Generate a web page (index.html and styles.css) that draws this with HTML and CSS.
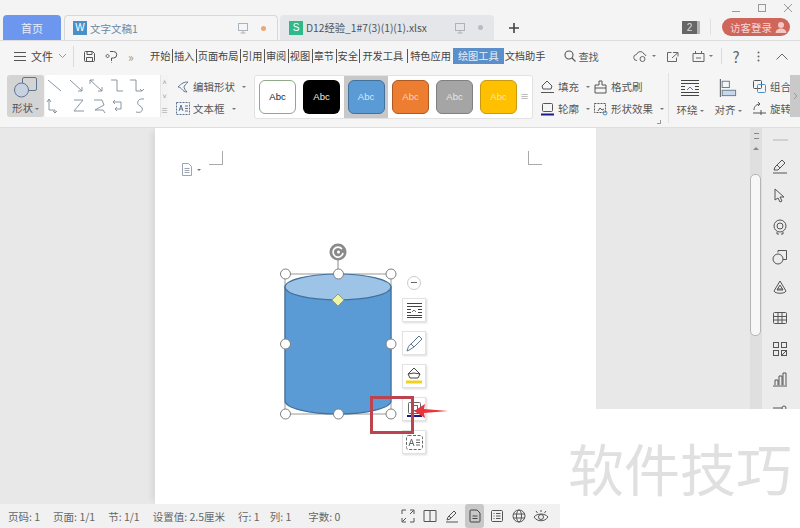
FILE: index.html
```html
<!DOCTYPE html>
<html lang="en">
<head>
    <meta charset="UTF-8">
    <title>文字文稿1</title>
    <link rel="stylesheet" href="styles.css">
</head>
<body>
<div class="window">
    <!-- Title bar with tabs -->
    <div class="tabbar">
        <div class="tab home">首页</div>
        <div class="tab doc active">
            <span class="file-icon word">W</span>
            <span class="tab-name">文字文稿1</span>
            <svg class="tab-monitor" width="14" height="14" viewBox="0 0 14 14" fill="none" stroke="#aab2bb"><rect x="2.5" y="2.5" width="9" height="7"/><path d="M7 9.5v2.5M4.5 12h5"/></svg>
            <span class="dot orange"></span>
        </div>
        <div class="tab doc">
            <span class="file-icon excel">S</span>
            <span class="tab-name dark">D12经验_1#7(3)(1)(1).xlsx</span>
            <svg class="tab-monitor" width="14" height="14" viewBox="0 0 14 14" fill="none" stroke="#aab2bb"><rect x="2.5" y="2.5" width="9" height="7"/><path d="M7 9.5v2.5M4.5 12h5"/></svg>
            <span class="dot grey"></span>
        </div>
        <svg class="plus" width="14" height="14" viewBox="0 0 14 14" stroke="#444" stroke-width="1.6"><path d="M7 2v10M2 7h10"/></svg>
        <div class="title-right">
            <div class="win-controls">
                <svg width="12" height="12" viewBox="0 0 12 12" stroke="#999" fill="none"><path d="M2 9.5h8"/></svg>
                <svg width="12" height="12" viewBox="0 0 12 12" stroke="#999" fill="none"><rect x="2.5" y="2.5" width="7" height="7"/></svg>
                <svg width="12" height="12" viewBox="0 0 12 12" stroke="#999" fill="none"><path d="M2 2l8 8M10 2l-8 8"/></svg>
            </div>
            <div class="title-actions">
                <span class="badge">2</span>
                <span class="title-sep"></span>
                <div class="login">访客登录<span class="avatar"><svg width="14" height="14" viewBox="0 0 14 14" fill="#f0c9c4"><circle cx="7" cy="5" r="3"/><path d="M1.5 13c.5-3.5 3-4.5 5.5-4.5s5 1 5.5 4.5z"/></svg></span></div>
            </div>
        </div>
    </div>

    <!-- Menu row -->
    <div class="menubar">
        <svg class="menu-burger" width="12" height="10" viewBox="0 0 12 10" stroke="#555"><path d="M0 1.5h12M0 5.5h12M0 9.5h12"/></svg>
        <span class="file-menu">文件</span>
        <svg class="chev" width="9" height="6" viewBox="0 0 9 6" fill="none" stroke="#999"><path d="M1 1l3.5 3.5L8 1"/></svg>
        <span class="menu-sep"></span>
        <svg width="13" height="13" viewBox="0 0 13 13" fill="none" stroke="#555"><path d="M1.5 2.5a1 1 0 0 1 1-1h7l2 2v7a1 1 0 0 1-1 1h-8a1 1 0 0 1-1-1zM4 1.5v3h5v-3M3.5 11.5v-4h6v4"/></svg>
        <svg class="undo" width="13" height="13" viewBox="0 0 13 13" fill="none" stroke="#555"><path d="M5 1.5h3.5a3 3 0 0 1 0 6.5H6.5v3M2.5 4.5a1.5 1.5 0 1 0 .1 0M6.5 12.5v-.5"/></svg>
        <span class="more">»</span>
        <div class="menu-tabs">
            <span>开始</span><span>插入</span><span>页面布局</span><span>引用</span><span>审阅</span><span>视图</span><span>章节</span><span>安全</span><span class="wide">开发工具</span><span class="special">特色应用</span><span class="current">绘图工具</span><span class="plain">文档助手</span>
        </div>
        <svg class="search" width="12" height="12" viewBox="0 0 12 12" fill="none" stroke="#555" stroke-width="1.1"><circle cx="5" cy="5" r="4"/><path d="M8 8l3.5 3.5"/></svg>
        <span class="search-text">查找</span>
        <div class="menu-right">
            <svg width="15" height="13" viewBox="0 0 15 13" fill="none" stroke="#666"><path d="M4 10.5a3 3 0 0 1-.5-6 4 4 0 0 1 7.5-.5 3 3 0 0 1 2 2"/><circle cx="9.5" cy="9" r="2.5"/></svg>
            <span class="caret"></span>
            <svg class="share" width="13" height="13" viewBox="0 0 13 13" fill="none" stroke="#666"><path d="M5.5 2.5h-4v9h9v-4M7 2.5h5v4M12 2.5l-6 5.5"/></svg>
            <svg class="stamp" width="13" height="13" viewBox="0 0 13 13" fill="none" stroke="#666"><path d="M1 3.5h11v8H1zM3.5 1v3M9.5 1v3M4 8h5"/></svg>
            <span class="caret"></span>
            <span class="menu-sep short"></span>
            <span class="help">?</span>
            <svg class="kebab" width="3" height="11" viewBox="0 0 3 11" fill="#666"><circle cx="1.5" cy="1.5" r="1"/><circle cx="1.5" cy="5.5" r="1"/><circle cx="1.5" cy="9.5" r="1"/></svg>
            <svg class="collapse" width="12" height="7" viewBox="0 0 12 7" fill="none" stroke="#666"><path d="M.5 6.5L6 1l5.5 5.5"/></svg>
        </div>
    </div>

    <!-- Drawing tools ribbon -->
    <div class="ribbon">
        <div class="shape-btn">
            <svg width="24" height="21" viewBox="0 0 24 21" fill="none" stroke="#5d7590"><rect x="8.5" y=".5" width="14" height="13" rx="1.5"/><circle cx="7.5" cy="13" r="7" fill="#c6d2df"/></svg>
            <span>形状<i class="caret"></i></span>
        </div>
        <div class="connectors">
            <svg width="115" height="42" viewBox="0 0 115 42" fill="none" stroke="#7d8a97" stroke-width=".9">
                <path d="M3 5l13 11M25 5l12 11M37 12v4h-4M45 5l12 11M45 9V5h4M57 12v4h-4M66 5h6v11h6M85 5h6v11h6M95 14l2 2 2-2"/>
                <path d="M4 24v11h6v3M2 27l2-3 2 3M8 36l2 2 2-2M29 25h9l-9 11h10M49 25h8l2 5-9 5h8l2 3M68 27h8v7h-6M70 25l-2 2 2 2M72 32l-2 2 2 2M99 24c-7-1-8 5-4 7s3 8-4 6"/>
            </svg>
            <div class="connectors-scroll"><span>˄</span><span>˅</span><span>≡</span></div>
        </div>
        <div class="tool-col edit-col">
            <div class="tool"><svg width="14" height="14" viewBox="0 0 14 14" fill="none" stroke="#5d7590"><path d="M12 2C8 2 6 3 2 7c4 0 4 5 9 5-2-2-3-4-3-5s2-3 4-5z"/></svg>编辑形状<i class="caret"></i></div>
            <div class="tool"><svg width="14" height="13" viewBox="0 0 14 13" fill="none" stroke="#5d7590"><rect x=".5" y=".5" width="13" height="12" stroke-dasharray="2 1"/><path d="M3 9l2-6 2 6M3.8 7h2.4M9 4h3M9 6.5h3M9 9h3"/></svg>文本框<i class="caret"></i></div>
        </div>
        <div class="styles">
            <span class="swatch s-white">Abc</span>
            <span class="swatch s-black">Abc</span>
            <span class="swatch-wrap"><span class="swatch s-blue">Abc</span></span>
            <span class="swatch s-orange">Abc</span>
            <span class="swatch s-grey">Abc</span>
            <span class="swatch s-yellow">Abc</span>
            <span class="styles-more">≡</span>
        </div>
        <div class="tool-col fill-col">
            <div class="tool"><svg width="15" height="14" viewBox="0 0 15 14" fill="none" stroke="#555"><path d="M7 1l5 5-1 3H3L2 6zM1 12.5h13"/></svg>填充<i class="caret"></i></div>
            <div class="tool"><svg width="15" height="14" viewBox="0 0 15 14" fill="none" stroke="#555"><rect x="2.5" y="1.5" width="10" height="8" rx="1"/><path d="M1 12.5h13" stroke="#1a1a8a" stroke-width="2"/></svg>轮廓<i class="caret"></i></div>
        </div>
        <div class="tool-col brush-col">
            <div class="tool"><svg width="15" height="14" viewBox="0 0 15 14" fill="none" stroke="#555"><path d="M6 1h3v4h4v3H2V5h4zM2 8v5h11V8"/></svg>格式刷</div>
            <div class="tool"><svg width="15" height="14" viewBox="0 0 15 14" fill="none" stroke="#555"><rect x="1.5" y="1.5" width="11" height="9" stroke-dasharray="2 1"/><path d="M5 9l2-3 2 2 2-1"/><circle cx="12" cy="11" r="2" stroke="#4a90c8"/></svg>形状效果<i class="caret"></i></div>
        </div>
        <span class="ribbon-corner"></span>
        <span class="ribbon-sep"></span>
        <div class="big-tool wrap-tool">
            <svg width="20" height="18" viewBox="0 0 20 18" fill="none" stroke="#444"><path d="M1 1.5h18M1 4.5h18M1 7.5h4M15 7.5h4M1 10.5h4M15 10.5h4M1 13.5h18M1 16.5h18"/><path d="M7 11l3-3 3 3" stroke="#5d7590"/></svg>
            <span>环绕<i class="caret"></i></span>
        </div>
        <div class="big-tool">
            <svg width="20" height="20" viewBox="0 0 20 20" fill="none" stroke="#5d7590"><path d="M1.5 0v20" stroke="#444"/><rect x="3.5" y="2.5" width="8" height="7"/><rect x="3.5" y="12.5" width="15" height="6" fill="#c6d8ea"/></svg>
            <span>对齐<i class="caret"></i></span>
        </div>
        <div class="tool-col group-col">
            <div class="tool"><svg width="15" height="15" viewBox="0 0 15 15" fill="none" stroke="#555"><rect x="1.5" y="1.5" width="8" height="8" rx="1"/><rect x="5.5" y="5.5" width="8" height="8" rx="1" stroke="#4a90c8"/></svg>组合</div>
            <div class="tool"><svg width="15" height="15" viewBox="0 0 15 15" fill="none" stroke="#555"><path d="M2 9c0-4 3-6 6-6M6 1l2 2-2 2M1 12h13M9 9v5"/></svg>旋转</div>
        </div>
        <div class="ribbon-next"><svg width="5" height="8" viewBox="0 0 5 8" fill="none" stroke="#999"><path d="M1 1l3 3-3 3"/></svg></div>
    </div>

    <!-- Document area -->
    <div class="workspace">
        <div class="doc-area">
            <div class="page">
                <div class="page-top">
                    <span class="crop crop-left"></span>
                    <span class="crop crop-right"></span>
                </div>
                <div class="page-note">
                    <svg width="12" height="13" viewBox="0 0 12 13" fill="none" stroke="#9aa5b1"><path d="M1.5.5h6l3 3v9h-9zM3.5 5.5h5M3.5 7.5h5M3.5 9.5h5"/></svg>
                    <i class="caret"></i>
                </div>

                <!-- viewBox uses window coordinates -->
                <svg class="canvas" width="441" height="377" viewBox="155 127 441 377">
                    <path d="M338 273v-14" stroke="#888" fill="none"/>
                    <path d="M285 273H391V413H285z" fill="none" stroke="#999"/>
                    <path d="M285 286v114c0 7 24 13 53 13s53-6 53-13V286z" fill="#5b9bd5" stroke="#41719c" stroke-width="1.2"/>
                    <ellipse cx="338" cy="286" rx="53" ry="13" fill="#9dc3e6" stroke="#41719c" stroke-width="1.2"/>
                    <circle cx="338" cy="251" r="8.5" fill="#8a8a8a"/>
                    <path d="M342 248a5 5 0 1 0 1 4" fill="none" stroke="#fff" stroke-width="1.6"/>
                    <circle cx="338.5" cy="251" r="1.5" fill="#fff"/>
                    <g fill="#fff" stroke="#808080">
                        <circle cx="285.5" cy="273" r="5"/>
                        <circle cx="338.5" cy="273" r="5"/>
                        <circle cx="391" cy="273" r="5"/>
                        <circle cx="285.5" cy="343" r="5"/>
                        <circle cx="391" cy="343" r="5"/>
                        <circle cx="285.5" cy="413" r="5"/>
                        <circle cx="338.5" cy="413" r="5"/>
                        <circle cx="391" cy="413" r="5"/>
                    </g>
                    <path d="M338 293l6 6-6 6-6-6z" fill="#eef5a6" stroke="#8a9a8a"/>
                </svg>

                <div class="float-tools">
                    <span class="float-min"></span>
                    <span class="float-btn"><svg width="17" height="17" viewBox="0 0 17 17" fill="none" stroke="#444"><path d="M1 1.5h15M1 4.5h15M1 7.5h4M12 7.5h4M1 10.5h4M12 10.5h4M1 13.5h15M1 15.5h15"/><path d="M6 10l2-2 2 2" stroke="#667"/></svg></span>
                    <span class="float-btn"><svg width="17" height="17" viewBox="0 0 17 17" fill="none" stroke="#5d7590"><path d="M1 16c1-4 2-6 4-7l8-8 3 3-8 8c-2 1-4 3-7 4zM5 9l3 3"/></svg></span>
                    <span class="float-btn"><svg width="18" height="18" viewBox="0 0 18 18" fill="none" stroke="#444"><path d="M9 1l6 6-2 4H5L3 7zM3 7l6-1 6 1"/><path d="M1 15h16" stroke="#f0d020" stroke-width="3"/></svg></span>
                    <span class="float-btn"><svg width="17" height="17" viewBox="0 0 17 17" fill="none" stroke="#666"><rect x="2.5" y="1.5" width="12" height="11" rx="1"/><rect x="5.5" y="4.5" width="6" height="5"/><path d="M1 15h15" stroke="#1a1a8a" stroke-width="2"/></svg></span>
                    <span class="float-btn"><svg width="17" height="15" viewBox="0 0 17 15" fill="none" stroke="#666"><rect x=".5" y=".5" width="16" height="14" rx="2" stroke-dasharray="3 1.5"/><path d="M3 11l2.5-7L8 11M3.8 8.5h3.4M10 5h4M10 7.5h4M10 10h4"/></svg></span>
                </div>

                <!-- annotations drawn over the screenshot -->
                <span class="mark-box"></span>
                <svg class="mark-arrow" width="34" height="14" viewBox="0 0 34 14"><path d="M0 7L11 0l-1 5 24 2-24 2 1 5z" fill="#e8343c"/></svg>
            </div>
        </div>
        <div class="scrollbar">
            <div class="scroll-arrows">
                <span class="scroll-top"></span>
                <span class="scroll-up"></span>
            </div>
            <div class="scroll-thumb"></div>
        </div>
        <div class="sidebar">
            <span class="side-lines"></span>
            <svg width="16" height="16" viewBox="0 0 16 16" fill="none" stroke="#555"><path d="M1 15h14M2 12l1-3 7-7 3 3-7 7zM5 7l3 3"/></svg>
            <svg width="16" height="16" viewBox="0 0 16 16" fill="none" stroke="#555"><path d="M3 1v11l3-2 2 4 2-1-2-4h4z"/></svg>
            <svg width="16" height="16" viewBox="0 0 16 16" fill="none" stroke="#555"><circle cx="8" cy="7" r="6"/><circle cx="8" cy="7" r="3"/><path d="M5 13v2h2M11 13v2H9"/></svg>
            <svg width="16" height="16" viewBox="0 0 16 16" fill="none" stroke="#555"><path d="M6 3.5V1.5h8.5v9H11"/><circle cx="6" cy="10" r="5"/></svg>
            <svg width="16" height="16" viewBox="0 0 16 16" fill="none" stroke="#555"><path d="M8 1l6 10c-1 3-11 3-12 0zM5 9h6M8 5l3 5H5z"/></svg>
            <svg width="16" height="16" viewBox="0 0 16 16" fill="none" stroke="#555"><rect x="1.5" y="2.5" width="13" height="11" rx="1"/><path d="M1.5 6.5h13M1.5 10h13M6 2.5v11M10 2.5v11"/></svg>
            <svg width="16" height="16" viewBox="0 0 16 16" fill="none" stroke="#555"><rect x="1.5" y="1.5" width="5" height="5"/><rect x="9.5" y="1.5" width="5" height="5"/><rect x="1.5" y="9.5" width="5" height="5"/><rect x="9.5" y="9.5" width="5" height="5"/><path d="M10 14l4-4"/></svg>
            <svg width="16" height="16" viewBox="0 0 16 16" fill="none" stroke="#555"><path d="M1 15h14M3 14V9h3v5M7 14V5h3v9M11 14V2h3v12"/></svg>
            <svg width="16" height="16" viewBox="0 0 16 16" fill="none" stroke="#555"><path d="M1 6h9"/><circle cx="12" cy="6" r="2"/></svg>
        </div>

        <!-- white block over the bottom right of the capture -->
        <div class="cover"></div>
    </div>

    <!-- Status bar -->
    <div class="statusbar">
        <span class="stat">页码: 1</span>
        <span class="stat">页面: 1/1</span>
        <span class="stat">节: 1/1</span>
        <span class="stat">设置值: 2.5厘米</span>
        <span class="stat">行: 1</span>
        <span class="stat col">列: 1</span>
        <span class="stat count">字数: 0</span>
        <div class="views">
            <span class="view"><svg width="14" height="14" viewBox="0 0 14 14" fill="none" stroke="#555"><path d="M1 5V1h4M9 1h4v4M13 9v4H9M5 13H1V9M1.5 12.5L5 9M12.5 1.5L9 5"/></svg></span>
            <span class="view"><svg width="14" height="14" viewBox="0 0 14 14" fill="none" stroke="#555"><path d="M1 1.5h12v11H1zM7 1.5v11"/></svg></span>
            <span class="view"><svg width="14" height="14" viewBox="0 0 14 14" fill="none" stroke="#555"><path d="M1 13h12M2 11l1-3 6-6 2 2-6 6zM4 7l2 2"/></svg></span>
            <span class="view on"><svg width="14" height="14" viewBox="0 0 14 14" fill="none" stroke="#444"><path d="M2 2a1 1 0 0 1 1-1h6l3 3v8a1 1 0 0 1-1 1H3a1 1 0 0 1-1-1zM4.5 7h5M4.5 9.5h5"/></svg></span>
            <span class="view"><svg width="14" height="14" viewBox="0 0 14 14" fill="none" stroke="#555"><rect x="1.5" y="1.5" width="11" height="11" rx="1"/><path d="M3.5 4.5h1M6 4.500h4.5M3.5 7h1M6 7h4.5M3.5 9.5h1M6 9.5h4.5"/></svg></span>
            <span class="view"><svg width="14" height="14" viewBox="0 0 14 14" fill="none" stroke="#555"><circle cx="7" cy="7" r="6"/><ellipse cx="7" cy="7" rx="2.5" ry="6"/><path d="M1 5h12M1 9h12"/></svg></span>
            <span class="view"><svg width="16" height="14" viewBox="0 0 16 14" fill="none" stroke="#555"><path d="M1 8c3-4 11-4 14 0-3 5-11 5-14 0z"/><circle cx="8" cy="8" r="2.5"/><path d="M3 2l1.5 2M8 1v2M13 2l-1.5 2"/></svg></span>
        </div>
    </div>

    <div class="watermark">软件技巧</div>
</div>
</body>
</html>
```

FILE: styles.css
```css
* {
    margin: 0;
    padding: 0;
    box-sizing: border-box;
}

body {
    font-family: "Noto Sans CJK SC", "Liberation Sans", sans-serif;
    background: #fff;
    color: #555;
    font-size: 11px;
}

.window {
    position: relative;
    width: 800px;
    height: 528px;
    overflow: hidden;
    display: flex;
    flex-direction: column;
}

.caret {
    display: inline-block;
    width: 0;
    height: 0;
    margin-left: 4px;
    vertical-align: middle;
    border-left: 2px solid transparent;
    border-right: 2px solid transparent;
    border-top: 2.5px solid #777;
}

/* title bar */
.tabbar {
    height: 41px;
    flex: none;
    display: flex;
    align-items: flex-end;
    padding-left: 3px;
    background: #f4f4f5;
    border-bottom: 1px solid #dcdcdc;
}

.tab {
    height: 25px;
    display: flex;
    align-items: center;
    border-radius: 4px 4px 0 0;
    font-size: 11px;
}

.home {
    width: 58px;
    justify-content: center;
    background: #6d97ee;
    color: #e8eefc;
    margin-right: 3px;
}

.doc {
    width: 214px;
    padding-left: 9px;
    margin-right: 2px;
    background: #e4e6ea;
}

.doc.active {
    background: #f5f5f5;
    border: 1px solid #d8d8d8;
    border-bottom: none;
    padding-left: 8px;
}

.file-icon {
    width: 14px;
    height: 14px;
    margin-right: 3px;
    color: #fff;
    font-size: 10px;
    line-height: 14px;
    text-align: center;
    font-family: "Liberation Sans", sans-serif;
}

.word {
    background: #4a90c8;
}

.excel {
    background: #2fb98a;
}

.tab-name {
    flex: 1;
    color: #6b87a3;
    font-size: 10.5px;
}

.tab-name.dark {
    color: #4d5560;
    font-size: 10.3px;
}

.tab-monitor {
    margin-right: 4px;
}

.dot {
    width: 5px;
    height: 5px;
    border-radius: 50%;
    margin: 0 11px 0 7px;
}

.dot.orange {
    background: #e8a878;
}

.dot.grey {
    background: #b8bcc2;
}

.plus {
    margin: 0 0 5px 11px;
}

.title-right {
    flex: 1;
    align-self: stretch;
    display: flex;
    flex-direction: column;
    align-items: flex-end;
}

.win-controls {
    display: flex;
    gap: 14px;
    padding: 2px 6px 0 0;
    height: 18px;
}

.title-actions {
    display: flex;
    align-items: center;
    padding-right: 10px;
}

.badge {
    width: 18px;
    height: 13px;
    background: #666;
    border-right: 3px solid #b5b5b5;
    color: #ddd;
    font-size: 10px;
    line-height: 13px;
    text-align: center;
    font-family: "Liberation Sans", sans-serif;
}

.title-sep {
    width: 1px;
    height: 16px;
    margin: 0 11px 0 10px;
    background: #e0e0e0;
}

.login {
    width: 68px;
    height: 18px;
    display: flex;
    align-items: center;
    justify-content: space-between;
    padding: 0 2px 0 8px;
    border-radius: 9px;
    background: #d0655c;
    color: #f5d8d4;
    font-size: 10.5px;
}

.avatar {
    display: flex;
    width: 14px;
    height: 14px;
}

/* menu row */
.menubar {
    height: 30px;
    flex: none;
    display: flex;
    align-items: center;
    padding-left: 14px;
    background: #f5f5f5;
}

.file-menu {
    margin-left: 5px;
    font-size: 11px;
    color: #444;
    white-space: nowrap;
}

.chev {
    margin-left: 5px;
}

.menu-sep {
    width: 1px;
    height: 21px;
    margin: 0 9px 0 6px;
    background: #dadada;
}

.undo {
    margin-left: 9px;
}

.more {
    margin-left: 10px;
    width: 21px;
    color: #999;
    font-size: 12px;
}

.menu-tabs {
    display: flex;
    align-items: center;
    font-size: 10.2px;
    color: #444;
    line-height: 14px;
}

.menu-tabs span {
    padding: 0 1.5px 0 1px;
    border-right: 1px solid #555;
    white-space: nowrap;
}

.menu-tabs span.wide {
    padding: 0 4px 0 2px;
}

.menu-tabs span.special {
    padding: 0 1px 0 2px;
    border-right: none;
}

.menu-tabs span.current {
    margin-left: 1px;
    padding: 1px 5px;
    background: #5b8fc9;
    color: #e6eefa;
    border-right: none;
}

.menu-tabs span.plain {
    border-right: none;
    padding: 0 1px;
}

.search {
    margin-left: 18px;
}

.search-text {
    margin-left: 2px;
    font-size: 10.2px;
    white-space: nowrap;
}

.menu-right {
    margin-left: auto;
    padding-right: 12px;
    display: flex;
    align-items: center;
}

.share {
    margin-left: 10px;
}

.stamp {
    margin-left: 13px;
}

.menu-sep.short {
    height: 16px;
    margin: 0 0 0 8px;
}

.help {
    width: 28px;
    text-align: center;
    font-size: 15px;
    color: #666;
}

.kebab {
    margin-left: 7px;
}

.collapse {
    margin-left: 16px;
}

/* ribbon */
.ribbon {
    height: 57px;
    flex: none;
    display: flex;
    align-items: flex-start;
    padding: 4px 0 0 7px;
    background: #f5f5f5;
    border-bottom: 1px solid #dedede;
    font-size: 10.5px;
    position: relative;
}

.shape-btn {
    width: 37px;
    height: 42px;
    display: flex;
    flex-direction: column;
    align-items: center;
    padding-top: 2px;
    background: #d4d4d4;
    border-radius: 3px;
}

.shape-btn span {
    white-space: nowrap;
    line-height: 14px;
    margin-top: 3px;
}

.shape-btn .caret {
    margin-left: 2px;
}

.connectors {
    width: 123px;
    height: 42px;
    margin-left: 1px;
    display: flex;
    background: #fff;
    border-radius: 3px;
}

.connectors-scroll {
    width: 8px;
    display: flex;
    flex-direction: column;
    justify-content: space-between;
    align-items: center;
    color: #999;
    font-size: 7px;
    line-height: 14px;
    background: #f3f3f3;
    border-left: 1px solid #e4e4e4;
}

.tool-col {
    display: flex;
    flex-direction: column;
    gap: 7px;
    padding-top: 4px;
}

.tool {
    display: flex;
    align-items: center;
    gap: 3px;
    height: 15px;
    white-space: nowrap;
}

.tool svg {
    flex: none;
}

.edit-col {
    width: 78px;
    margin-left: 8px;
}

.styles {
    width: 279px;
    height: 44px;
    display: flex;
    align-items: center;
    padding-left: 4px;
    background: #fff;
    border: 1px solid #e2e2e2;
    border-radius: 3px;
    position: relative;
}

.swatch {
    width: 37px;
    height: 34px;
    margin-right: 7px;
    flex: none;
    border-radius: 6px;
    font-family: "Liberation Sans", sans-serif;
    font-size: 9.5px;
    line-height: 32px;
    text-align: center;
    border: 1px solid transparent;
}

.swatch-wrap {
    width: 44px;
    height: 42px;
    margin: 0 4px 0 -3px;
    display: flex;
    align-items: center;
    justify-content: center;
    flex: none;
    background: #c8c8c8;
}

.swatch-wrap .swatch {
    margin: 0;
}

.s-white {
    border-color: #8fa88a;
    color: #222;
}

.s-black {
    background: #000;
    color: #eee;
}

.s-blue {
    background: #5b9bd5;
    border-color: #41719c;
    color: #d6e8f8;
}

.s-orange {
    background: #ed7d31;
    border-color: #ad5a22;
    color: #f6d5bc;
}

.s-grey {
    background: #a5a5a5;
    border-color: #808080;
    color: #e8e8e8;
}

.s-yellow {
    background: #ffc000;
    border-color: #c89a10;
    color: #fbe6a0;
}

.styles-more {
    position: absolute;
    right: 3px;
    top: 14px;
    color: #888;
    font-size: 9px;
}

.fill-col {
    width: 53px;
    margin-left: 7px;
}

.brush-col {
    width: 75px;
}

.ribbon-corner {
    position: absolute;
    left: 657px;
    top: 49px;
    width: 4px;
    height: 4px;
    border-right: 1px solid #999;
    border-bottom: 1px solid #999;
}

.ribbon-sep {
    width: 1px;
    height: 50px;
    margin-top: -2px;
    background: #e2e2e2;
}

.big-tool {
    width: 38px;
    height: 42px;
    display: flex;
    flex-direction: column;
    align-items: center;
    padding-top: 4px;
}

.big-tool span {
    margin-top: 6px;
    white-space: nowrap;
    line-height: 14px;
}

.big-tool .caret {
    margin-left: 2px;
}

.wrap-tool {
    margin-left: 2px;
}

.group-col {
    width: 48px;
    margin-left: 5px;
}

.ribbon-next {
    position: absolute;
    right: 0;
    top: 4px;
    width: 10px;
    height: 42px;
    display: flex;
    align-items: center;
    justify-content: center;
    background: #c9c9c9;
}

/* document */
.workspace {
    flex: 1;
    display: flex;
    position: relative;
    min-height: 0;
    background: #e8e8e8;
}

.doc-area {
    width: 750px;
    padding-left: 155px;
    overflow: hidden;
}

.page {
    position: relative;
    width: 441px;
    height: 100%;
    background: #fff;
    box-shadow: -6px 0 6px -3px rgba(0, 0, 0, 0.08);
}

.page-top {
    display: flex;
    justify-content: space-between;
    padding: 23px 54px 0;
}

.crop {
    width: 14px;
    height: 14px;
    border-bottom: 1px solid #aaa;
}

.crop-left {
    border-right: 1px solid #aaa;
}

.crop-right {
    border-left: 1px solid #aaa;
}

.page-note {
    display: flex;
    align-items: center;
    margin: -2px 0 0 26px;
}

.canvas {
    position: absolute;
    left: 0;
    top: 0;
}

.float-tools {
    position: absolute;
    left: 247px;
    top: 148px;
    width: 24px;
    display: flex;
    flex-direction: column;
    align-items: center;
    gap: 9px;
}

.float-min {
    position: relative;
    width: 14px;
    height: 14px;
    margin-bottom: -1px;
    border: 1px solid #ccc;
    border-radius: 50%;
}

.float-min::after {
    content: "";
    position: absolute;
    left: 3px;
    top: 5px;
    width: 6px;
    height: 1px;
    background: #666;
}

.float-btn {
    width: 24px;
    height: 24px;
    flex: none;
    display: flex;
    align-items: center;
    justify-content: center;
    background: #fff;
    border: 1px solid #e2e2e2;
    box-shadow: 1px 1px 2px rgba(0, 0, 0, 0.15);
}

.mark-box {
    position: absolute;
    left: 215px;
    top: 268px;
    width: 44px;
    height: 38px;
    border: 3px solid #bb4450;
}

.mark-arrow {
    position: absolute;
    left: 259px;
    top: 276px;
}

.scrollbar {
    width: 12px;
    background: #dfdfdf;
    position: relative;
}

.scroll-arrows {
    height: 46px;
    display: flex;
    flex-direction: column;
    align-items: center;
    gap: 8px;
    padding-top: 5px;
}

.scroll-top {
    width: 5px;
    height: 6px;
    border-top: 1px solid #888;
    border-bottom: 1px solid #888;
}

.scroll-up {
    width: 0;
    height: 0;
    border-left: 3px solid transparent;
    border-right: 3px solid transparent;
    border-bottom: 3px solid #888;
}

.scroll-thumb {
    width: 11px;
    height: 162px;
    background: #f7f7f7;
    border: 1px solid #b5b5b5;
    border-radius: 5px;
}

.sidebar {
    width: 38px;
    display: flex;
    flex-direction: column;
    align-items: center;
    gap: 14.5px;
    padding: 11px 2px 0 0;
    background: #ececec;
}

.side-lines {
    width: 15px;
    height: 2px;
    margin-bottom: 2px;
    background: #d0d0d0;
}

.cover {
    position: absolute;
    right: 0;
    bottom: 0;
    width: 204px;
    height: 95px;
    background: #fff;
}

/* status bar */
.statusbar {
    height: 24px;
    width: 560px;
    flex: none;
    display: flex;
    align-items: center;
    padding-left: 8px;
    background: #f1f1f1;
    font-size: 10.5px;
    color: #666;
}

.stat {
    margin-right: 13px;
    white-space: nowrap;
}

.stat.col {
    margin-left: -3px;
    margin-right: 17px;
}

.views {
    margin-left: auto;
    display: flex;
    align-items: center;
    padding-right: 8px;
}

.view {
    width: 22px;
    height: 24px;
    display: flex;
    align-items: center;
    justify-content: center;
}

.view.on {
    width: 19px;
    margin: 0 2px;
    background: #c8c8c8;
    border-radius: 3px;
}

.watermark {
    position: absolute;
    right: 8px;
    bottom: 26px;
    font-size: 56px;
    line-height: 70px;
    font-weight: 400;
    color: #e0e0e0;
    white-space: nowrap;
}
```
